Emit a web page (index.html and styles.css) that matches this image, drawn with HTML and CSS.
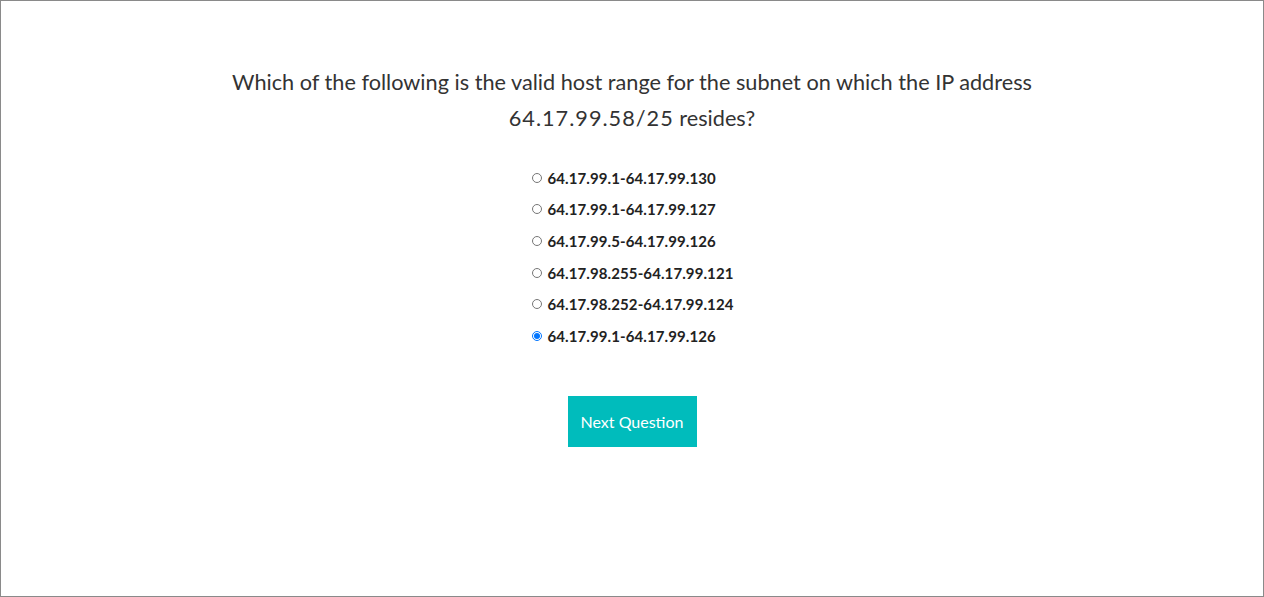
FILE: index.html
```html
<!DOCTYPE html>
<html lang="en">
<head>
<meta charset="utf-8">
<title>Quiz</title>
<link rel="stylesheet" href="styles.css">
</head>
<body>
<div class="page">
  <main class="quiz">
    <h1 class="question">Which of the following is the valid host range for the subnet on which the IP address <span class="ip">64.17.99.58/25</span> resides?</h1>
    <form class="options">
      <label class="option"><input type="radio" name="a"><span>64.17.99.1-64.17.99.130</span></label>
      <label class="option"><input type="radio" name="a"><span>64.17.99.1-64.17.99.127</span></label>
      <label class="option"><input type="radio" name="a"><span>64.17.99.5-64.17.99.126</span></label>
      <label class="option"><input type="radio" name="a"><span>64.17.98.255-64.17.99.121</span></label>
      <label class="option"><input type="radio" name="a"><span>64.17.98.252-64.17.99.124</span></label>
      <label class="option"><input type="radio" name="a" checked><span>64.17.99.1-64.17.99.126</span></label>
    </form>
    <button class="next" type="button">Next Question</button>
  </main>
</div>
</body>
</html>
```
FILE: styles.css
```css
html, body {
  margin: 0;
  padding: 0;
  background: #fff;
}
.page {
  box-sizing: border-box;
  height: 597px;
  border: 1px solid #8a8a8a;
  font-family: Lato, "Liberation Sans", sans-serif;
}
.quiz {
  display: flex;
  flex-direction: column;
  align-items: center;
  padding-top: 63px;
}
.question {
  margin: 0;
  width: 830px;
  text-align: center;
  font-size: 21.7px;
  line-height: 36px;
  font-weight: 400;
  color: #333;
}
.ip {
  letter-spacing: 1px;
}
.options {
  display: flex;
  flex-direction: column;
  align-items: flex-start;
  margin-top: 26px;
  padding-left: 2px;
}
.option {
  display: flex;
  align-items: center;
  height: 31.6px;
  font-size: 15px;
  font-weight: 700;
  letter-spacing: 0.1px;
  color: #222;
}
.option input {
  margin: 0 5px 0 0;
  width: 10px;
  height: 10px;
}
.next {
  margin-top: 44px;
  width: 129px;
  height: 51px;
  border: none;
  background: #00bcbc;
  color: #fff;
  font-family: inherit;
  font-size: 16px;
  padding: 0;
}
```
